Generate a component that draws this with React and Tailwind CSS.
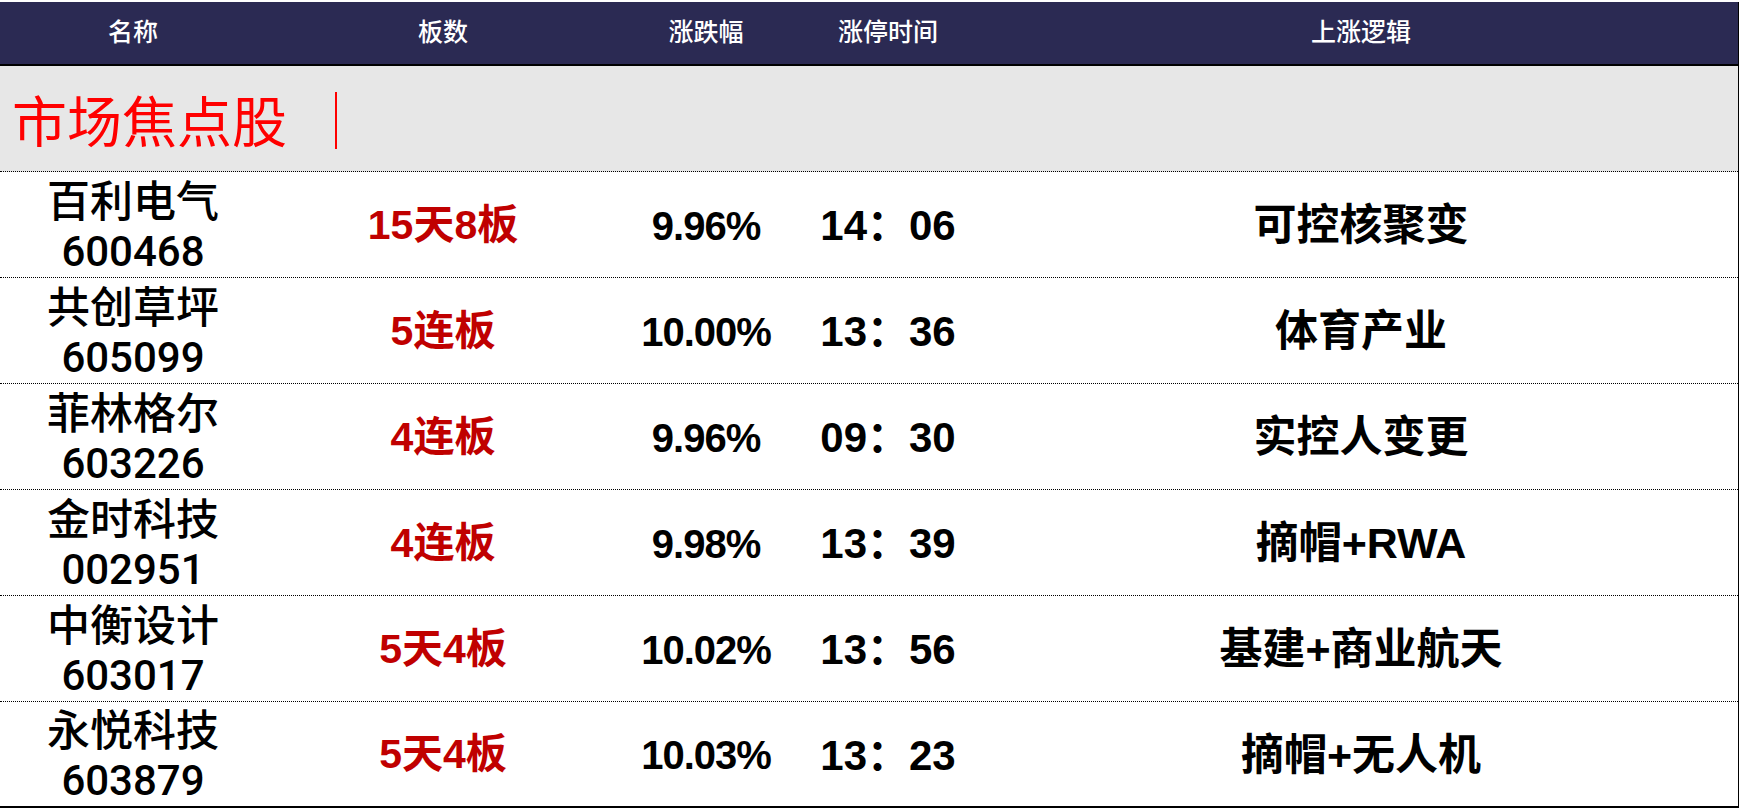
import React from "react";

const rows = [
  { name: "百利电气", code: "600468", boards: "15天8板", pct: "9.96%", time: "14：06", logic: "可控核聚变" },
  { name: "共创草坪", code: "605099", boards: "5连板", pct: "10.00%", time: "13：36", logic: "体育产业" },
  { name: "菲林格尔", code: "603226", boards: "4连板", pct: "9.96%", time: "09：30", logic: "实控人变更" },
  { name: "金时科技", code: "002951", boards: "4连板", pct: "9.98%", time: "13：39", logic: "摘帽+RWA" },
  { name: "中衡设计", code: "603017", boards: "5天4板", pct: "10.02%", time: "13：56", logic: "基建+商业航天" },
  { name: "永悦科技", code: "603879", boards: "5天4板", pct: "10.03%", time: "13：23", logic: "摘帽+无人机" },
];

const font = { fontFamily: '"Liberation Sans", "Noto Sans CJK SC", sans-serif' };

export default function App() {
  return (
    <div className="w-[1740px] h-[809px] bg-white pt-[2px]" style={font}>
      <div className="w-[1739px] border-r border-black">
        {/* header */}
        <div className="grid grid-cols-[266px_354px_172px_192px_1fr] h-[64px] bg-[#2b2a53] border-b-2 border-black text-white text-[25px] font-medium items-center">
          <div className="text-center">名称</div>
          <div className="text-center">板数</div>
          <div className="text-center">涨跌幅</div>
          <div className="text-center">涨停时间</div>
          <div className="text-center">上涨逻辑</div>
        </div>
        {/* section */}
        <div className="h-[106px] bg-[#e7e7e7] border-b border-dotted border-black flex items-center pl-[12px]">
          <span className="text-[#ff0000] text-[55px] leading-none" style={{ fontFamily: '"Noto Sans CJK SC", serif' }}>市场焦点股</span>
          <span className="ml-[48px] mt-[4px] w-[2px] h-[57px] bg-[#ff0000]"></span>
        </div>
        {rows.map((r, i) => (
          <div
            key={r.code}
            className={
              "grid grid-cols-[266px_354px_172px_192px_1fr] h-[106px] items-center bg-white " +
              (i === rows.length - 1 ? "border-b-2 border-solid border-black" : "border-b border-dotted border-black")
            }
          >
            <div className="flex flex-col items-center gap-[4px] text-black leading-[50px]">
              <span className="text-[43px] font-medium" style={{ fontFamily: '"Noto Sans CJK SC", sans-serif' }}>{r.name}</span>
              <span className="text-[42px] font-medium" style={{ fontFamily: 'Roboto, "Liberation Sans", sans-serif' }}>{r.code}</span>
            </div>
            <div className="text-center text-[#c00000] text-[41px] font-bold pt-[2px]">{r.boards}</div>
            <div className="text-center text-black text-[40px] font-bold pt-[2px] tracking-[-1px]">{r.pct}</div>
            <div className="text-center text-black text-[42px] font-bold pt-[2px]">{r.time}</div>
            <div className="text-center text-black text-[43px] font-bold pt-[2px]">{r.logic}</div>
          </div>
        ))}
      </div>
    </div>
  );
}
